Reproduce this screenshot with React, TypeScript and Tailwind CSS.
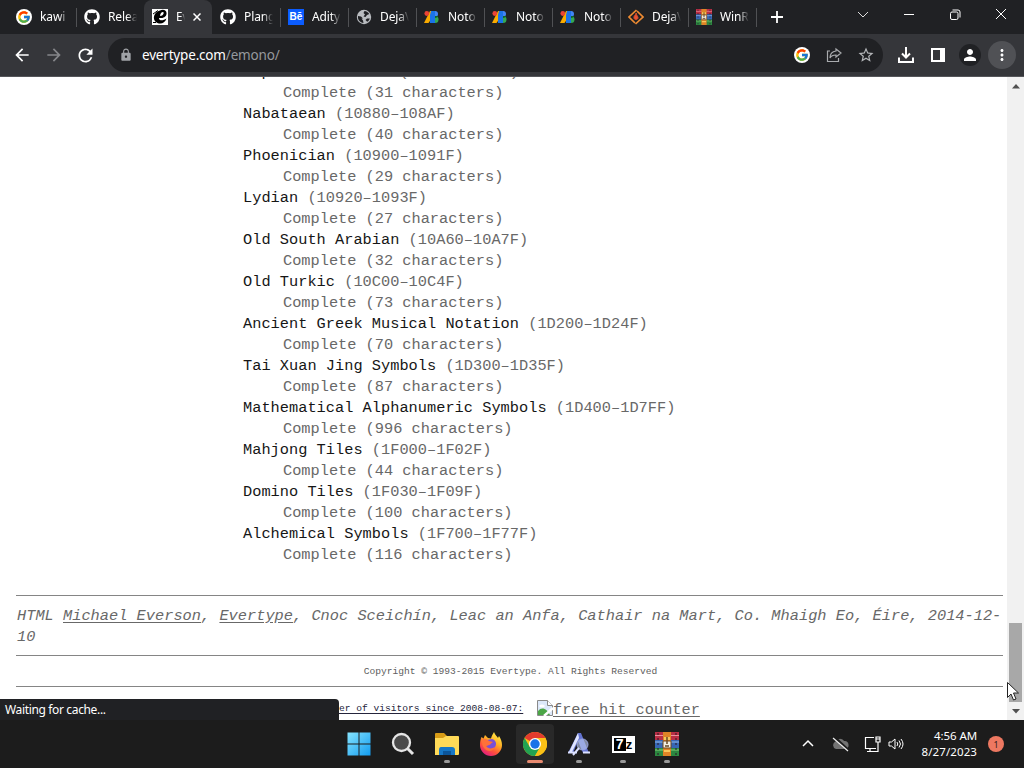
import type { ReactNode } from 'react';
import { FcGoogle } from 'react-icons/fc';
import { FaGithub } from 'react-icons/fa';
import { MdArrowBack, MdArrowForward, MdRefresh, MdLock, MdStarBorder, MdPerson, MdMoreVert } from 'react-icons/md';

const blocks: [string, string, number][] = [
  ['Imperial Aramaic', '10840–1085F', 31],
  ['Nabataean', '10880–108AF', 40],
  ['Phoenician', '10900–1091F', 29],
  ['Lydian', '10920–1093F', 27],
  ['Old South Arabian', '10A60–10A7F', 32],
  ['Old Turkic', '10C00–10C4F', 73],
  ['Ancient Greek Musical Notation', '1D200–1D24F', 70],
  ['Tai Xuan Jing Symbols', '1D300–1D35F', 87],
  ['Mathematical Alphanumeric Symbols', '1D400–1D7FF', 996],
  ['Mahjong Tiles', '1F000–1F02F', 44],
  ['Domino Tiles', '1F030–1F09F', 100],
  ['Alchemical Symbols', '1F700–1F77F', 116],
];

function GoogleDisc() {
  return (
    <span className="flex size-4 items-center justify-center rounded-full bg-white">
      <FcGoogle size={14} />
    </span>
  );
}

function Evertype() {
  return (
    <svg viewBox="0 0 16 16" className="size-4">
      <path fill="#fff" d="M0 0h16v16H0z" />
      <path fill="#000" d="M8 1.500c4-1.800 7 .5 6.500 3.500C14 8.500 10 9.500 7 9c0 3 4 3 7.500.5C13 14 9 15.500 5.500 14 1.500 12.500 1 8 3 5c1.200-1.800 3-3 5-3.500z" />
      <path fill="#fff" d="M8 7c.3-2.500 1.500-4 3-4s.5 4-3 4z" />
      <path stroke="#000" strokeWidth="1" d="M1 5l5-3.500M1 13.500h3" />
    </svg>
  );
}

function Globe() {
  return (
    <svg viewBox="0 0 16 16" className="size-4">
      <circle cx="8" cy="8" r="7.200" fill="#b9bcc0" />
      <path fill="#202124" d="M2 7l3 .5 2 2H5.500l1.500 2 .5 2.500C4 13.500 1.500 11 2 7zM8.500 2c2 .2 3.700 1.200 4.700 3L11 6l-1.500 2-2-.5L9 5.500 7.500 4zM11 9.500h2.800c-.5 1.500-1.300 2.500-2.600 3.300L9.500 11z" />
    </svg>
  );
}

function Behance() {
  return (
    <span className="flex size-4 items-center justify-center bg-[#0b5cff] font-['Liberation_Sans'] text-[10px] font-bold leading-none text-white">
      Bē
    </span>
  );
}

function GoogleFonts() {
  return (
    <svg viewBox="0 0 16 16" className="size-4">
      <path fill="#f9ab00" d="M6 2h4v4L4.500 14H0z" />
      <circle cx="2.800" cy="4.500" r="2.400" fill="#ea4335" />
      <path fill="#1a73e8" d="M7 2h4v12H6V6z" />
      <path fill="#4285f4" d="M11 2a3 3 0 010 6z" />
      <path fill="#34a853" d="M11 7a3.500 3.500 0 010 7z" />
      <path fill="#0d652d" d="M11 7h3a3 3 0 01-3 2z" />
    </svg>
  );
}

function SourceForge() {
  return (
    <svg viewBox="0 0 16 16" className="size-4" fill="none" stroke="#ee8b32" strokeWidth="1.700">
      <path d="M8.500 1L1 8l6 6M7.500 15L15 8 9 2" />
      <path fill="#e65335" stroke="#d84b28" strokeWidth="1" d="M8.200 4c-.4 2-2.700 2.800-2.200 5 .3 2 3.700 2 4 0 .2-1.600-1.500-2-1.800-5z" />
    </svg>
  );
}

function WinRar({ size }: { size: number }) {
  return (
    <svg width={size} height={size} viewBox="0 0 24 24">
      <path fill="#b92e45" d="M0 0h24v8H0z" />
      <path fill="#3666b4" d="M0 8h24v8H0z" />
      <path fill="#2c8740" d="M0 16h24v8H0z" />
      <path stroke="#e8929c" strokeWidth="1" d="M0 3.500h24" />
      <path stroke="#91b7ea" strokeWidth="1" d="M0 10h24" />
      <path stroke="#86cd78" strokeWidth="1" d="M0 18h24" />
      <path stroke="#281525" strokeWidth="1" strokeDasharray="2 3" d="M3 1v22M21 1v22" />
      <path fill="#df8427" d="M8 0h8v24H8z" />
      <path fill="#f8c65c" d="M9 5h6v3H9zM9 18h6v2H9z" />
      <path fill="#f2eee2" stroke="#70451d" d="M8 9h8v7H8z" />
      <path fill="none" stroke="#684927" strokeWidth="1.500" d="M12 5v7M10 14h4" />
    </svg>
  );
}

const tabs: { title: string; icon: ReactNode; active?: boolean; sep?: boolean }[] = [
  { title: 'kawi', icon: <GoogleDisc />, sep: true },
  { title: 'Relea', icon: <FaGithub size={16} /> },
  { title: 'Ev', icon: <Evertype />, active: true },
  { title: 'Plang', icon: <FaGithub size={16} />, sep: true },
  { title: 'Adity', icon: <Behance />, sep: true },
  { title: 'DejaV', icon: <Globe />, sep: true },
  { title: 'Noto', icon: <GoogleFonts />, sep: true },
  { title: 'Noto', icon: <GoogleFonts />, sep: true },
  { title: 'Noto', icon: <GoogleFonts />, sep: true },
  { title: 'DejaV', icon: <SourceForge />, sep: true },
  { title: 'WinR', icon: <WinRar size={16} />, sep: true },
];

function TabStrip() {
  return (
    <div className="flex h-[34px] bg-[#202124] pl-2 text-white">
      {tabs.map((t, i) => (
        <div key={i} className={`relative flex w-[68px] shrink-0 items-center pl-2 ${t.active ? 'rounded-t-lg bg-[#35363a]' : ''}`}>
          <span className="flex size-4 shrink-0 items-center justify-center">{t.icon}</span>
          <span
            className={`ml-2 shrink-0 overflow-hidden whitespace-nowrap text-[12px] leading-4 tracking-[-0.1px] ${t.active ? 'w-[9px] [mask-image:linear-gradient(90deg,#000_50%,transparent)]' : 'w-[29px] [mask-image:linear-gradient(90deg,#000_65%,transparent)]'}`}
          >
            {t.title}
          </span>
          {t.active && (
            <svg viewBox="0 0 8 8" className="ml-[8px] size-[8px]" stroke="#fff" strokeWidth="1.500">
              <path d="M.5.500l7 7M7.500.500l-7 7" />
            </svg>
          )}
          {t.sep && <span className="absolute -right-px top-2 h-[19px] w-px bg-[#505154]" />}
        </div>
      ))}
      <svg className="ml-[15px] mt-[11px] size-3" viewBox="0 0 12 12" stroke="#fff" strokeWidth="1.800">
        <path d="M6 0v12M0 6h12" />
      </svg>
      <div className="ml-auto flex w-[184px] justify-around pt-[9px]">
        <svg className="size-3" viewBox="0 0 12 12" fill="none" stroke="#ddd">
          <path d="M1 3l5 5 5-5" />
        </svg>
        <svg className="size-3" viewBox="0 0 12 12" stroke="#fff">
          <path d="M1 5.500h10" />
        </svg>
        <svg className="size-3" viewBox="0 0 12 12" fill="none" stroke="#fff">
          <rect x="1.500" y="3" width="7.500" height="7.500" rx="1.500" />
          <path d="M3.500 1h5.500q2 0 2 2v5.500" />
        </svg>
        <svg className="size-3" viewBox="0 0 12 12" stroke="#fff">
          <path d="M1 0l10 10M11 0L1 10" />
        </svg>
      </div>
    </div>
  );
}

function Toolbar() {
  return (
    <div className="flex h-[43px] items-center border-b border-[#55565a] bg-[#35363a] text-white">
      <MdArrowBack size={20} className="ml-3" />
      <MdArrowForward size={20} className="ml-3 text-[#85868a]" />
      <MdRefresh size={21} className="ml-[11px]" />
      <div className="ml-[12px] flex h-[34px] w-[775px] items-center rounded-full bg-[#202124] pl-[11px] pr-2">
        <MdLock size={14} className="text-[#a0a3a7]" />
        <span className="ml-[9px] text-[13.500px] leading-5 tracking-[-0.180px]">
          evertype.com<span className="text-[#96999d]">/emono/</span>
        </span>
        <span className="ml-auto"><GoogleDisc /></span>
        <svg className="ml-4 size-4" viewBox="0 0 16 16" fill="none" stroke="#a9abae" strokeWidth="1.200">
          <path d="M4 4H1.500v10.500h11V11M10 2l5 4-5 4V8C7 8 5 9 4 11c0-4 2-6.500 6-7z" />
        </svg>
        <MdStarBorder size={18} className="ml-[15px] text-[#b4b6b9]" />
      </div>
      <svg className="ml-[15px] size-4" viewBox="0 0 16 16" fill="none" stroke="#fff" strokeWidth="2">
        <path d="M8 0v10M4 6.500l4 4 4-4M1 10.500V15h14v-4.500" />
      </svg>
      <svg className="ml-[17px] size-[14px]" viewBox="0 0 14 14" fill="none" stroke="#fff" strokeWidth="2">
        <path d="M1 1h12v12H1z" />
        <path d="M11 1v12" strokeWidth="4" />
      </svg>
      <span className="ml-[14px] flex size-[22px] items-center justify-center rounded-full bg-[#202124]">
        <MdPerson size={18} />
      </span>
      <span className="ml-[7px] flex size-7 items-center justify-center rounded-full bg-[#505155]">
        <MdMoreVert size={18} />
      </span>
    </div>
  );
}

function Rule() {
  return <div className="h-px bg-[#858585]" />;
}

function Page() {
  return (
    <div className="h-full w-[1007px] overflow-hidden bg-white pl-4 pr-1 font-['Liberation_Mono',monospace] text-[15.300px] leading-[21px] text-[#686868]">
      <dl className="-mt-[15px] pl-[227px] pr-4">
        {blocks.map(([name, range, count]) => (
          <div key={name}>
            <dt className="whitespace-pre tracking-[0.020px]">
              <span className="text-[#161616]">{name}</span> ({range})
            </dt>
            <dd className="pl-10">Complete ({count} characters)</dd>
          </div>
        ))}
      </dl>
      <div className="h-[29px]" />
      <Rule />
      <address className="h-[59px] pl-px pt-[10px] text-[15.320px] italic tracking-[0.010px]">
        <div className="flex whitespace-pre">
          <span>HTML </span>
          <a className="underline underline-offset-2">Michael Everson</a>
          <span>, </span>
          <a className="underline underline-offset-2">Evertype</a>
          <span>, Cnoc Sceichín, Leac an Anfa, Cathair na Mart, Co. Mhaigh Eo, Éire, 2014-12-</span>
        </div>
        <div>10</div>
      </address>
      <Rule />
      <p className="h-[30px] pl-[2px] pt-[5px] text-center text-[9.600px] text-[#606060]">Copyright © 1993-2015 Evertype. All Rights Reserved</p>
      <Rule />
      <div className="flex pl-[300px] pt-[13px]">
        <a className="w-[221px] whitespace-nowrap text-[9.600px] leading-[18px] text-[#25253c] underline underline-offset-2">
          Number of visitors since 2008-08-07:
        </a>
        <svg className="size-4 shrink-0" viewBox="0 0 16 16">
          <path fill="#dce8fa" stroke="#8a8a8a" d="M.500.500h10l5 5v10H.500z" />
          <path fill="#fff" stroke="#8a8a8a" d="M10.500.500v5h5" />
          <ellipse cx="5" cy="6" rx="2.800" ry="1.500" fill="#fff" />
          <path fill="#4ba646" d="M1 11c4-5 9-2 12 4H1z" />
          <path stroke="#fff" strokeWidth="2.500" d="M7 16l9-8" />
        </svg>
        <a className="underline underline-offset-2">free hit counter</a>
      </div>
    </div>
  );
}

function Scrollbar() {
  return (
    <div className="flex w-[17px] flex-col items-center bg-[#f1f1f1]">
      <svg className="mt-[7px] h-[5px] w-2" viewBox="0 0 8 5"><path fill="#505050" d="M0 4.500L4 0l4 4.500z" /></svg>
      <div className="mt-[534px] h-[79px] w-[13px] bg-[#a8a8a8]" />
      <svg className="mt-[7px] h-[5px] w-2" viewBox="0 0 8 5"><path fill="#505050" d="M0 0l4 4.500L8 0z" /></svg>
    </div>
  );
}

function ChromeLogo() {
  return (
    <svg viewBox="0 0 24 24" className="size-6">
      <circle cx="12" cy="12" r="12" fill="#fbc116" />
      <path fill="#e33b2e" d="M12 12L1.600 6a12 12 0 0120.800 0H12z" />
      <path fill="#22a352" d="M1.600 6a12 12 0 0010.400 18l5.200-9L12 12 6.800 15z" />
      <path fill="#fbc116" d="M12 6h10.400A12 12 0 0112 24l5.200-9z" />
      <circle cx="12" cy="12" r="6" fill="#fff" />
      <circle cx="12" cy="12" r="4.700" fill="#1a73e8" />
    </svg>
  );
}

function Firefox() {
  return (
    <svg viewBox="0 0 24 24" className="size-6">
      <defs>
        <linearGradient id="fox" x1=".8" y1="0" x2=".25" y2="1">
          <stop stopColor="#fff24a" /><stop offset=".4" stopColor="#ffad25" /><stop offset=".7" stopColor="#ff513a" /><stop offset="1" stopColor="#df1888" />
        </linearGradient>
      </defs>
      <path fill="url(#fox)" d="M2.500 5l2 1.500L6 3l3 3 3 .5C12.500 4 14 2 15 0c1 3 3 4 4 6l1-2c2 3 3 6 3 9a11 11 0 11-22 0c0-3 .5-6 1.500-8z" />
      <path fill="#7950d8" d="M8 8l5-1c4 1 5 5 3 8s-7 3-9-1l5-2-4-2z" />
      <path fill="#ff7139" d="M3 8c3-2 5-1 7 1l4 1-4 3-3 1c2 3 6 3 9 1-2 5-8 5-11 1-2-2-2-5-2-8z" />
    </svg>
  );
}

const apps: { icon: ReactNode; open?: boolean; active?: boolean }[] = [
  { icon: (
    <svg viewBox="0 0 24 24" className="size-6"><defs><linearGradient id="win" x2="1" y2="1"><stop stopColor="#86e4ff" /><stop offset="1" stopColor="#129cf0" /></linearGradient></defs><path fill="url(#win)" d="M.500.500h11v11H.500zM12.500.500h11v11h-11zM.500 12.500h11v11H.500zM12.500 12.500h11v11h-11z" /></svg>
  ) },
  { icon: <svg viewBox="0 0 24 24" className="size-6" fill="#4a4a4a" stroke="#e5e5e5" strokeWidth="2.300"><path strokeWidth="3" d="M16 16l6 6" /><circle cx="10.500" cy="10.500" r="8.500" /></svg> },
  { icon: <svg viewBox="0 0 24 24" className="size-6"><path fill="#d79b16" d="M0 2q0-1 1-1h8l3 3v3H0z" /><path fill="#ffda58" d="M0 6h8l3-2h12q1 0 1 1v17q0 1-1 1H0z" /><path fill="#1677c6" d="M4 23v-5q0-3 2-3h11q3 0 3 3v5z" /><path fill="#0b559a" d="M8 19h8v4H8z" /></svg>, open: true },
  { icon: <Firefox /> },
  { icon: <ChromeLogo />, open: true, active: true },
  { icon: <svg viewBox="0 0 24 24" className="size-6"><path fill="#6373d2" d="M11 1h3l8 20h-6l-5-12-5 12H1z" /><path fill="#dfe5ff" d="M11 1L2 20h3l7-14z" /><circle cx="15.500" cy="12.500" r="5.500" fill="#bac7ed" fillOpacity=".65" stroke="#9aa6e2" /><path stroke="#dae0ff" strokeWidth="2" d="M12 16l-6 7M1 20.500h9M16 20.500h7" /></svg>, open: true },
  { icon: <span className="flex h-[17px] w-[23px] items-center justify-center border-2 border-white bg-white"><span className="flex h-full w-3 items-center justify-center bg-black font-['Liberation_Sans'] text-[14px] font-bold leading-none text-white">7</span><span className="font-['Liberation_Sans'] text-[13px] font-bold leading-none text-black">z</span></span>, open: true },
  { icon: <WinRar size={24} />, open: true },
];

function Taskbar() {
  return (
    <div className="flex h-12 bg-[#1c1c1c] pl-[337px] text-white">
      {apps.map((a, i) => (
        <div key={i} className="flex w-11 shrink-0 justify-center pt-1">
          <div className={`flex h-[40px] w-[38px] flex-col items-center rounded pt-2 ${a.active ? 'bg-[#292929]' : ''}`}>
            <span className="flex size-6 items-center justify-center">{a.icon}</span>
            {a.open && <span className={`mt-[4px] h-[3px] shrink-0 rounded-full ${a.active ? 'w-4 bg-[#e98b71]' : 'w-[6px] bg-[#999]'}`} />}
          </div>
        </div>
      ))}
      <div className="ml-auto flex items-center pr-5">
        <svg className="h-3 w-3" viewBox="0 0 12 12" fill="none" stroke="#fff" strokeWidth="1.500"><path d="M1 8l5-5 5 5" /></svg>
        <svg className="ml-[18px] h-4 w-[17px]" viewBox="0 0 17 16"><path fill="#737373" d="M4 13a4 4 0 01-.5-7.500A5 5 0 0112 5a4 4 0 011 8z" /><path stroke="#1c1c1c" strokeWidth="3" d="M2 1l14 13" /><path stroke="#eee" strokeWidth="1.200" d="M1 2l15 13" /></svg>
        <svg className="ml-[15px] size-[17px]" viewBox="0 0 17 17" fill="none" stroke="#fff" strokeWidth="1.200"><path d="M10 1.500H1.500v11H12M6 12.500v3M3 15.500h8M12 1h4v5h-4zM14 6v9.500h-3M12 3h4" /></svg>
        <svg className="ml-[7px] size-4" viewBox="0 0 16 16" fill="none" stroke="#fff"><path d="M1 6h2.500L7 3v10l-3.500-3H1zM9 6q1.500 2 0 4M11 4.500q3 3.500 0 7M13 3q4 5 0 10" /></svg>
        <div className="ml-3 w-[61px] whitespace-nowrap text-right text-[11.500px] leading-[16px]">
          <div className="tracking-[-0.100px]">4:56 AM</div>
          <div className="tracking-[0.100px]">8/27/2023</div>
        </div>
        <span className="ml-[11px] flex size-4 items-center justify-center rounded-full bg-[#ed7861] text-[9px] leading-none text-[#34201c]">1</span>
      </div>
    </div>
  );
}

export default function App() {
  return (
    <div className="flex h-[768px] w-[1024px] flex-col overflow-hidden font-['Noto_Sans',sans-serif]">
      <TabStrip />
      <Toolbar />
      <div className="relative flex h-[643px] overflow-hidden">
        <Page />
        <Scrollbar />
        <div className="absolute bottom-0 left-0 flex h-[21px] w-[339px] items-center rounded-tr bg-[#202124] pl-[5px] text-[12px] tracking-[-0.350px] text-white">
          Waiting for cache...
        </div>
        <svg className="absolute left-[1007px] top-[605px] h-[19px] w-3" viewBox="0 0 12 19">
          <path fill="#fff" stroke="#222" d="M.500.500v15L4 12l2.500 6 2.500-1-2.500-6h5z" />
        </svg>
      </div>
      <Taskbar />
    </div>
  );
}
